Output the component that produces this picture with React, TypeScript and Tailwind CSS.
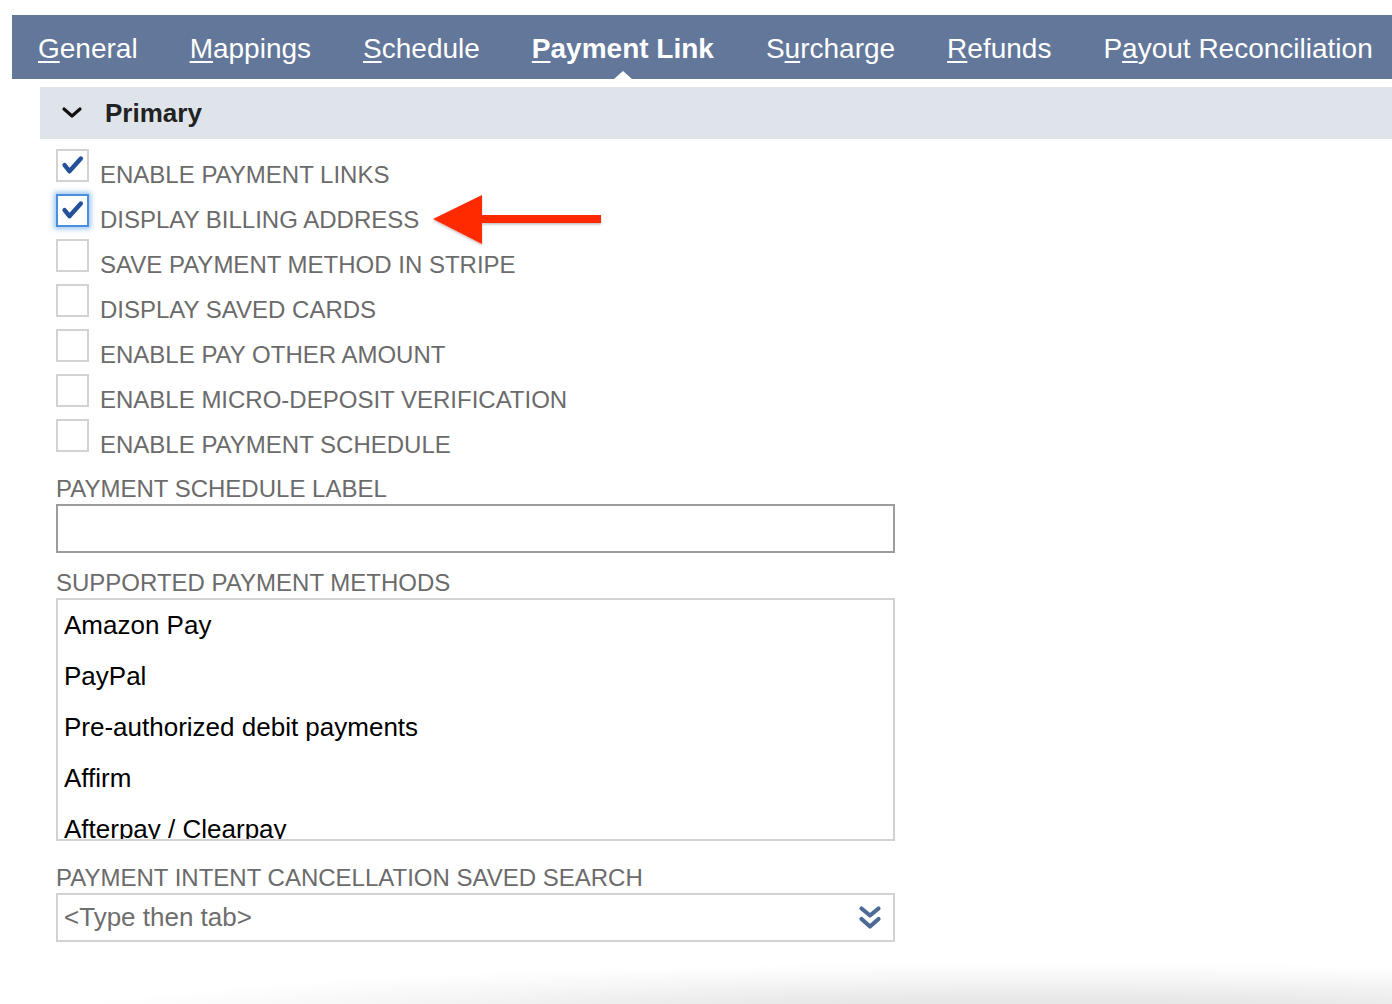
import { Fragment } from "react";

const tabs = [
  { label: "General", key: 0 },
  { label: "Mappings", key: 0 },
  { label: "Schedule", key: 0 },
  { label: "Payment Link", key: 0, active: true },
  { label: "Surcharge", key: 1 },
  { label: "Refunds", key: 0 },
  { label: "Payout Reconciliation", key: 1 },
];

const options = [
  { label: "Enable Payment Links", checked: true },
  { label: "Display Billing Address", checked: true, focused: true },
  { label: "Save Payment Method in Stripe" },
  { label: "Display Saved Cards" },
  { label: "Enable Pay Other Amount" },
  { label: "Enable Micro-Deposit Verification" },
  { label: "Enable Payment Schedule" },
];

const methods = [
  "Amazon Pay",
  "PayPal",
  "Pre-authorized debit payments",
  "Affirm",
  "Afterpay / Clearpay",
];

function CheckMark() {
  return (
    <svg viewBox="0 0 33 33" className="w-full h-full">
      <path
        d="M7.5 16 L13 23 L26 8.5"
        fill="none"
        stroke="#25519a"
        strokeWidth="5"
        strokeLinecap="round"
        strokeLinejoin="round"
      />
    </svg>
  );
}

function RedArrow() {
  return (
    <svg width="172" height="54" viewBox="0 0 172 54" className="shrink-0 -mt-[1px]">
      <defs>
        <filter id="arrowShadow" x="-10%" y="-20%" width="120%" height="150%">
          <feDropShadow dx="0" dy="1.5" stdDeviation="1.2" floodColor="#000" floodOpacity="0.25" />
        </filter>
      </defs>
      <polygon
        points="2,26 51,2 51,22 170,22 170,30 51,30 51,51"
        fill="#ff2a06"
        filter="url(#arrowShadow)"
      />
    </svg>
  );
}

function DoubleChevron() {
  return (
    <svg width="24" height="26" viewBox="0 0 24 26">
      <path
        d="M3.5 3.5 L12 10.5 L20.5 3.5"
        fill="none"
        stroke="#4c6a94"
        strokeWidth="4.2"
        strokeLinecap="round"
        strokeLinejoin="round"
      />
      <path
        d="M3.5 14 L12 21.5 L20.5 14"
        fill="none"
        stroke="#4c6a94"
        strokeWidth="4.2"
        strokeLinecap="round"
        strokeLinejoin="round"
      />
    </svg>
  );
}

export default function App() {
  return (
    <div className="min-h-[1004px] bg-white font-['Liberation_Sans',Arial,sans-serif] overflow-hidden">
      {/* Subtab bar */}
      <div className="ml-[12px] mt-[15px] h-[64px] bg-[#627799] flex items-center overflow-hidden">
        {tabs.map((t) => (
          <div
            key={t.label}
            className={`relative h-full px-[26px] pt-[3px] flex items-center text-[28px] text-white whitespace-nowrap ${
              t.active ? "font-bold" : ""
            }`}
          >
            <span>
              {t.label.slice(0, t.key)}
              <span className="underline decoration-[1.5px] underline-offset-[3px]">
                {t.label[t.key]}
              </span>
              {t.label.slice(t.key + 1)}
            </span>
            {t.active && (
              <span className="absolute bottom-0 left-1/2 -translate-x-1/2 w-0 h-0 border-l-[9px] border-r-[9px] border-b-[8px] border-l-transparent border-r-transparent border-b-white" />
            )}
          </div>
        ))}
      </div>

      {/* Section header */}
      <div className="ml-[40px] mt-[8px] h-[52px] bg-[#dfe4eb] flex items-center">
        <svg width="22" height="14" viewBox="0 0 22 14" className="ml-[21px]">
          <path
            d="M3 3 L11 10 L19 3"
            fill="none"
            stroke="#111"
            strokeWidth="3.2"
            strokeLinecap="round"
            strokeLinejoin="round"
          />
        </svg>
        <span className="ml-[22px] text-[26px] font-bold text-[#222]">Primary</span>
      </div>

      <div className="ml-[56px] mt-[10px]">
        {/* Checkbox options */}
        {options.map((o) => (
          <div key={o.label} className="flex items-start h-[45px]">
            <div
              className={`w-[33px] h-[33px] shrink-0 bg-white border-2 ${
                o.focused
                  ? "border-[#4a8fdc] shadow-[0_0_5px_2px_rgba(80,150,230,0.55)]"
                  : "border-[#d2d2d2]"
              }`}
            >
              {o.checked && <CheckMark />}
            </div>
            <span className="ml-[11px] pt-[12px] text-[24px] leading-[27px] text-[#6b6b6b] uppercase whitespace-nowrap">
              {o.label}
            </span>
            {o.focused && (
              <Fragment>
                <span className="ml-[12px]" />
                <RedArrow />
              </Fragment>
            )}
          </div>
        ))}

        <div className="w-[839px]">
          {/* Payment schedule label */}
          <div className="mt-[11px] h-[28px] leading-[28px] text-[24px] text-[#6b6b6b] uppercase">
            Payment Schedule Label
          </div>
          <div className="mt-[1px] h-[49px] border-2 border-[#9c9c9c] bg-white" />

          {/* Supported payment methods */}
          <div className="mt-[16px] h-[28px] leading-[28px] text-[24px] text-[#6b6b6b] uppercase">
            Supported Payment Methods
          </div>
          <div className="mt-[1px] h-[243px] border-2 border-[#d2d2d2] overflow-hidden bg-white">
            {methods.map((m) => (
              <div
                key={m}
                className="h-[51px] flex items-center pl-[6px] text-[26px] text-black whitespace-nowrap"
              >
                {m}
              </div>
            ))}
          </div>

          {/* Saved search */}
          <div className="mt-[23px] h-[28px] leading-[28px] text-[24px] text-[#6b6b6b] uppercase">
            Payment Intent Cancellation Saved Search
          </div>
          <div className="mt-[1px] h-[49px] border-2 border-[#d2d2d2] bg-white flex items-center justify-between pl-[6px] pr-[11px]">
            <span className="text-[26px] text-[#6e6e6e]">&lt;Type then tab&gt;</span>
            <DoubleChevron />
          </div>
        </div>
      </div>

      {/* Page shadow at bottom */}
      <div className="mt-[6px] h-[56px] bg-[radial-gradient(ellipse_90%_130%_at_75%_130%,#dcdcdc_0%,#eaeaea_35%,#f7f7f7_60%,#ffffff_80%)]" />
    </div>
  );
}
